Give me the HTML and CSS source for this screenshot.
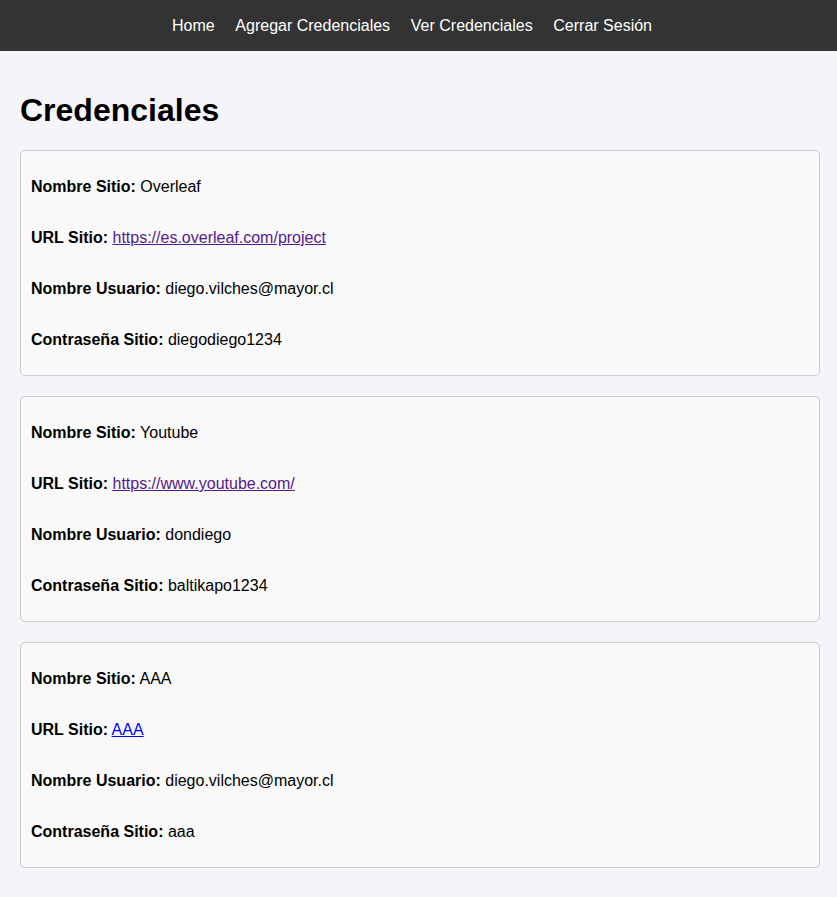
FILE: index.html
```html
<!DOCTYPE html>
<html lang="es">
<head>
<meta charset="utf-8">
<title>Credenciales</title>
<link rel="stylesheet" href="styles.css">
</head>
<body>
<nav class="navbar">
  <a href="#">Home</a>
  <a href="#">Agregar Credenciales</a>
  <a href="#">Ver Credenciales</a>
  <a href="#">Cerrar Sesión</a>
</nav>
<main class="container">
  <h1 class="title">Credenciales</h1>
  <div class="card">
    <p><strong>Nombre Sitio:</strong> Overleaf</p>
    <p><strong>URL Sitio:</strong> <a class="link visited" href="#">https://es.overleaf.com/project</a></p>
    <p><strong>Nombre Usuario:</strong> diego.vilches@mayor.cl</p>
    <p><strong>Contraseña Sitio:</strong> diegodiego1234</p>
  </div>
  <div class="card">
    <p><strong>Nombre Sitio:</strong> Youtube</p>
    <p><strong>URL Sitio:</strong> <a class="link visited" href="#">https://www.youtube.com/</a></p>
    <p><strong>Nombre Usuario:</strong> dondiego</p>
    <p><strong>Contraseña Sitio:</strong> baltikapo1234</p>
  </div>
  <div class="card">
    <p><strong>Nombre Sitio:</strong> AAA</p>
    <p><strong>URL Sitio:</strong> <a class="link" href="#">AAA</a></p>
    <p><strong>Nombre Usuario:</strong> diego.vilches@mayor.cl</p>
    <p><strong>Contraseña Sitio:</strong> aaa</p>
  </div>
</main>
</body>
</html>
```

FILE: styles.css
```css
html, body {
  margin: 0;
  padding: 0;
}
body {
  font-family: "Liberation Sans", Arial, sans-serif;
  font-size: 16px;
  background: #f4f4f9;
  color: #000;
}
.navbar {
  background: #333;
  height: 51px;
  box-sizing: border-box;
  display: flex;
  justify-content: center;
  align-items: center;
  gap: 20.7px;
  padding: 1px 13px 0 0;
}
.navbar a {
  color: #fff;
  text-decoration: none;
  line-height: 18px;
}
.container {
  padding: 20px;
}
.title {
  font-size: 32px;
  font-weight: bold;
  margin: 21px 0 21px;
  line-height: 37px;
}
.card {
  width: 800px;
  box-sizing: border-box;
  background: #f9f9f9;
  border: 1px solid #ccc;
  border-radius: 5px;
  padding: 10px;
  margin-bottom: 20px;
  display: flex;
  flex-direction: column;
}
.card p {
  margin: 16px 0;
  line-height: 19px;
}
.link {
  color: #0000ee;
  text-decoration: underline;
}
.link.visited {
  color: #551a8b;
}
```
